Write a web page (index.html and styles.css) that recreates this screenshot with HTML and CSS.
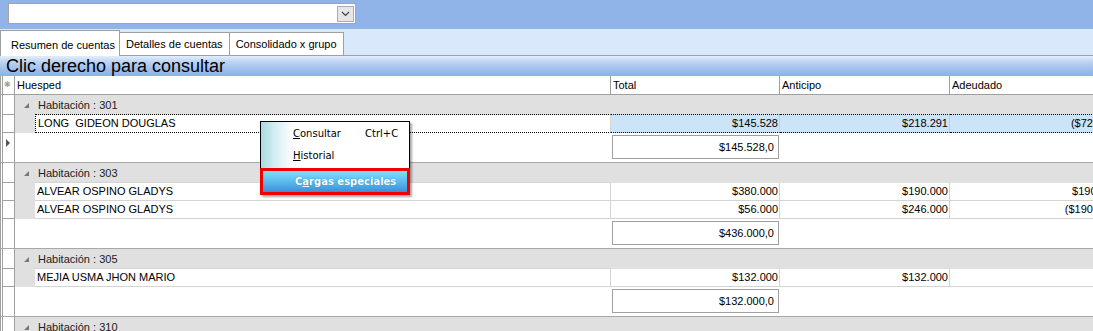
FILE: index.html
```html
<!DOCTYPE html>
<html lang="es">
<head>
  <meta charset="UTF-8" />
  <title>Resumen de cuentas</title>
  <link rel="stylesheet" href="styles.css">
</head>
<body>
  <div class="topbar">
    <div class="combo">
      <span class="combo-btn">
        <svg width="9" height="6" viewBox="0 0 9 6"><path d="M1 1 L4.5 4.5 L8 1" fill="none" stroke="#444" stroke-width="1.2"/></svg>
      </span>
    </div>
  </div>

  <div class="tabstrip">
    <div class="tab active">Resumen de cuentas</div>
    <div class="tab">Detalles de cuentas</div>
    <div class="tab">Consolidado x grupo</div>
  </div>

  <div class="caption">Clic derecho para consultar</div>

  <div class="grid">
    <div class="row head">
      <div class="sel"><span class="star">❋</span></div>
      <div class="cell">Huesped</div>
      <div class="cell">Total</div>
      <div class="cell">Anticipo</div>
      <div class="cell">Adeudado</div>
    </div>

    <!-- 301 -->
    <div class="row group">
      <div class="sel"></div>
      <div class="gcell"><span class="tri"></span>Habitación : 301</div>
    </div>
    <div class="row data focus">
      <div class="sel"></div>
      <div class="namecell"><span class="indent"></span><span class="name">LONG&nbsp; GIDEON DOUGLAS</span></div>
      <div class="num">$145.528</div>
      <div class="num">$218.291</div>
      <div class="num">($72.763)</div>
    </div>
    <div class="row sum">
      <div class="sel"><span class="cur"></span></div>
      <div></div>
      <div class="box">$145.528,0</div>
      <div></div>
      <div></div>
    </div>

    <!-- 303 -->
    <div class="row group">
      <div class="sel"></div>
      <div class="gcell"><span class="tri"></span>Habitación : 303</div>
    </div>
    <div class="row data">
      <div class="sel"></div>
      <div class="namecell"><span class="indent"></span><span class="name">ALVEAR OSPINO GLADYS</span></div>
      <div class="num">$380.000</div>
      <div class="num">$190.000</div>
      <div class="num">$190.000</div>
    </div>
    <div class="row data">
      <div class="sel"></div>
      <div class="namecell"><span class="indent"></span><span class="name">ALVEAR OSPINO GLADYS</span></div>
      <div class="num">$56.000</div>
      <div class="num">$246.000</div>
      <div class="num">($190.000)</div>
    </div>
    <div class="row sum">
      <div class="sel"></div>
      <div></div>
      <div class="box">$436.000,0</div>
      <div></div>
      <div></div>
    </div>

    <!-- 305 -->
    <div class="row group">
      <div class="sel"></div>
      <div class="gcell"><span class="tri"></span>Habitación : 305</div>
    </div>
    <div class="row data">
      <div class="sel"></div>
      <div class="namecell"><span class="indent"></span><span class="name">MEJIA USMA JHON MARIO</span></div>
      <div class="num">$132.000</div>
      <div class="num">$132.000</div>
      <div class="num"></div>
    </div>
    <div class="row sum">
      <div class="sel"></div>
      <div></div>
      <div class="box">$132.000,0</div>
      <div></div>
      <div></div>
    </div>

    <!-- 310 -->
    <div class="row group">
      <div class="sel"></div>
      <div class="gcell"><span class="tri"></span>Habitación : 310</div>
    </div>
  </div>

  <div class="menu">
    <div class="item"><span class="label"><u>C</u>onsultar</span><span class="key">Ctrl+C</span></div>
    <div class="item"><span class="label"><u>H</u>istorial</span></div>
    <div class="item hot"><span class="label">C<u>a</u>rgas especiales</span></div>
  </div>
</body>
</html>
```

FILE: styles.css
```css
body {
  margin: 0;
  font-family: "Liberation Sans", Arial, sans-serif;
  font-size: 11px;
  color: #000;
  background: #fff;
  overflow: hidden;
  height: 331px;
}

/* top combo bar */
.topbar {
  height: 29px;
  background: #90b4e7;
  padding: 3px 0 0 8px;
  box-sizing: border-box;
}
.combo {
  width: 345px;
  height: 19px;
  background: #fff;
  border: 1px solid #a5a5a5;
  display: flex;
  justify-content: flex-end;
  align-items: center;
  padding-right: 1px;
}
.combo-btn {
  width: 15px;
  height: 14px;
  border: 1px solid #acacac;
  background: #e6e6e6;
  display: flex;
  align-items: center;
  justify-content: center;
}

/* tabs */
.tabstrip {
  height: 26px;
  background: #d9e8fb;
  border-bottom: 1px solid #a0a0a0;
  display: flex;
  align-items: flex-end;
}
.tab {
  height: 22px;
  line-height: 22px;
  padding: 0 6px;
  background: #fff;
  border: 1px solid #a0a0a0;
  border-bottom: none;
  border-left: none;
}
.tab.active {
  height: 26px;
  line-height: 28px;
  width: 120px;
  box-sizing: border-box;
  padding: 0 0 0 10px;
  margin-bottom: -1px;
  border-left: 1px solid #a0a0a0;
}

/* caption */
.caption {
  height: 20px;
  line-height: 21px;
  padding-left: 6px;
  font-size: 18px;
  background: linear-gradient(#e3eefc 0%, #bcd3f3 30%, #9dbdec 70%, #8db1e6 100%);
}

/* grid */
.grid {
  border-left: 1px solid #a0a0a0;
}
.row {
  display: grid;
  grid-template-columns: 14px 596px 169px 170px 170px;
}
.sel {
  margin-left: 1px;
  border-left: 1px solid #a0a0a0;
  border-right: 1px solid #a0a0a0;
  border-bottom: 1px solid #a0a0a0;
  position: relative;
}
.head {
  height: 18px;
  border-bottom: 1px solid #a0a0a0;
}
.head .sel { border-bottom: none; }
.head .cell {
  line-height: 18px;
  padding-left: 2px;
  border-right: 1px solid #a0a0a0;
}
.star {
  font-family: "DejaVu Sans", sans-serif;
  font-size: 8px;
  color: #888;
  position: absolute;
  left: 1px;
  top: 4px;
}

.group { height: 20px; }
.gcell {
  grid-column: 2 / -1;
  background: #e0e0e0;
  color: #222;
  line-height: 20px;
  padding-left: 9px;
  display: flex;
  align-items: center;
}
.tri {
  width: 0;
  height: 0;
  border-left: 5px solid transparent;
  border-bottom: 5px solid #777;
  margin-right: 9px;
  margin-top: 1px;
}

.data { height: 18px; }
.namecell {
  display: flex;
}
.indent {
  width: 20px;
  background: #e0e0e0;
  flex: none;
}
.name {
  flex: 1;
  padding-left: 2px;
  line-height: 17px;
  border-right: 1px solid #d4d4d4;
  border-bottom: 1px solid #d4d4d4;
  border-top: 1px solid #d4d4d4;
  margin-top: -1px;
}
.num {
  text-align: right;
  padding-right: 1px;
  line-height: 17px;
  border-right: 1px solid #d4d4d4;
  border-bottom: 1px solid #d4d4d4;
  overflow: hidden;
  white-space: nowrap;
}
.focus .name {
  border: 1px dotted #000;
  border-right: 1px solid #d4d4d4;
  margin-top: -1px;
}
.focus .num {
  background: #cce4f7;
  border-top: 1px dotted #000;
  border-bottom: 1px dotted #000;
  border-right-color: #b8d2e8;
  margin-top: -1px;
}

.sum {
  height: 29px;
  border-bottom: 1px solid #a8a8a8;
}
.sum .sel { border-bottom: none; }
.box {
  margin: 2px 1px 3px 1px;
  border: 1px solid #a0a0a0;
  text-align: right;
  padding-right: 4px;
  line-height: 22px;
}
.cur {
  position: absolute;
  left: 3px;
  top: 6px;
  width: 0;
  height: 0;
  border-top: 4px solid transparent;
  border-bottom: 4px solid transparent;
  border-left: 4px solid #555;
}

/* context menu */
.menu {
  position: absolute;
  left: 260px;
  top: 121px;
  width: 150px;
  box-sizing: border-box;
  border: 1px solid #000;
  border-bottom: none;
  background: linear-gradient(to right, #a9dae2 0px, #d4eef2 14px, #fff 32px);
  box-shadow: 2px 2px 2px rgba(0, 0, 0, 0.35);
  font-family: "DejaVu Sans", Tahoma, sans-serif;
  font-size: 10px;
}
.item {
  height: 22px;
  display: flex;
  align-items: center;
  padding-left: 32px;
}
.label { width: 72px; }
.hot {
  margin: 2px -1px 0 -1px;
  height: 27px;
  box-sizing: border-box;
  border: 3px solid #f00000;
  padding-left: 32px;
  color: #fff;
  font-weight: bold;
  background: linear-gradient(#84def7, #5bbbee 50%, #3d8ed8);
}
.hot .label { width: auto; text-shadow: 0 0 1px #2a6aa8; }
```
